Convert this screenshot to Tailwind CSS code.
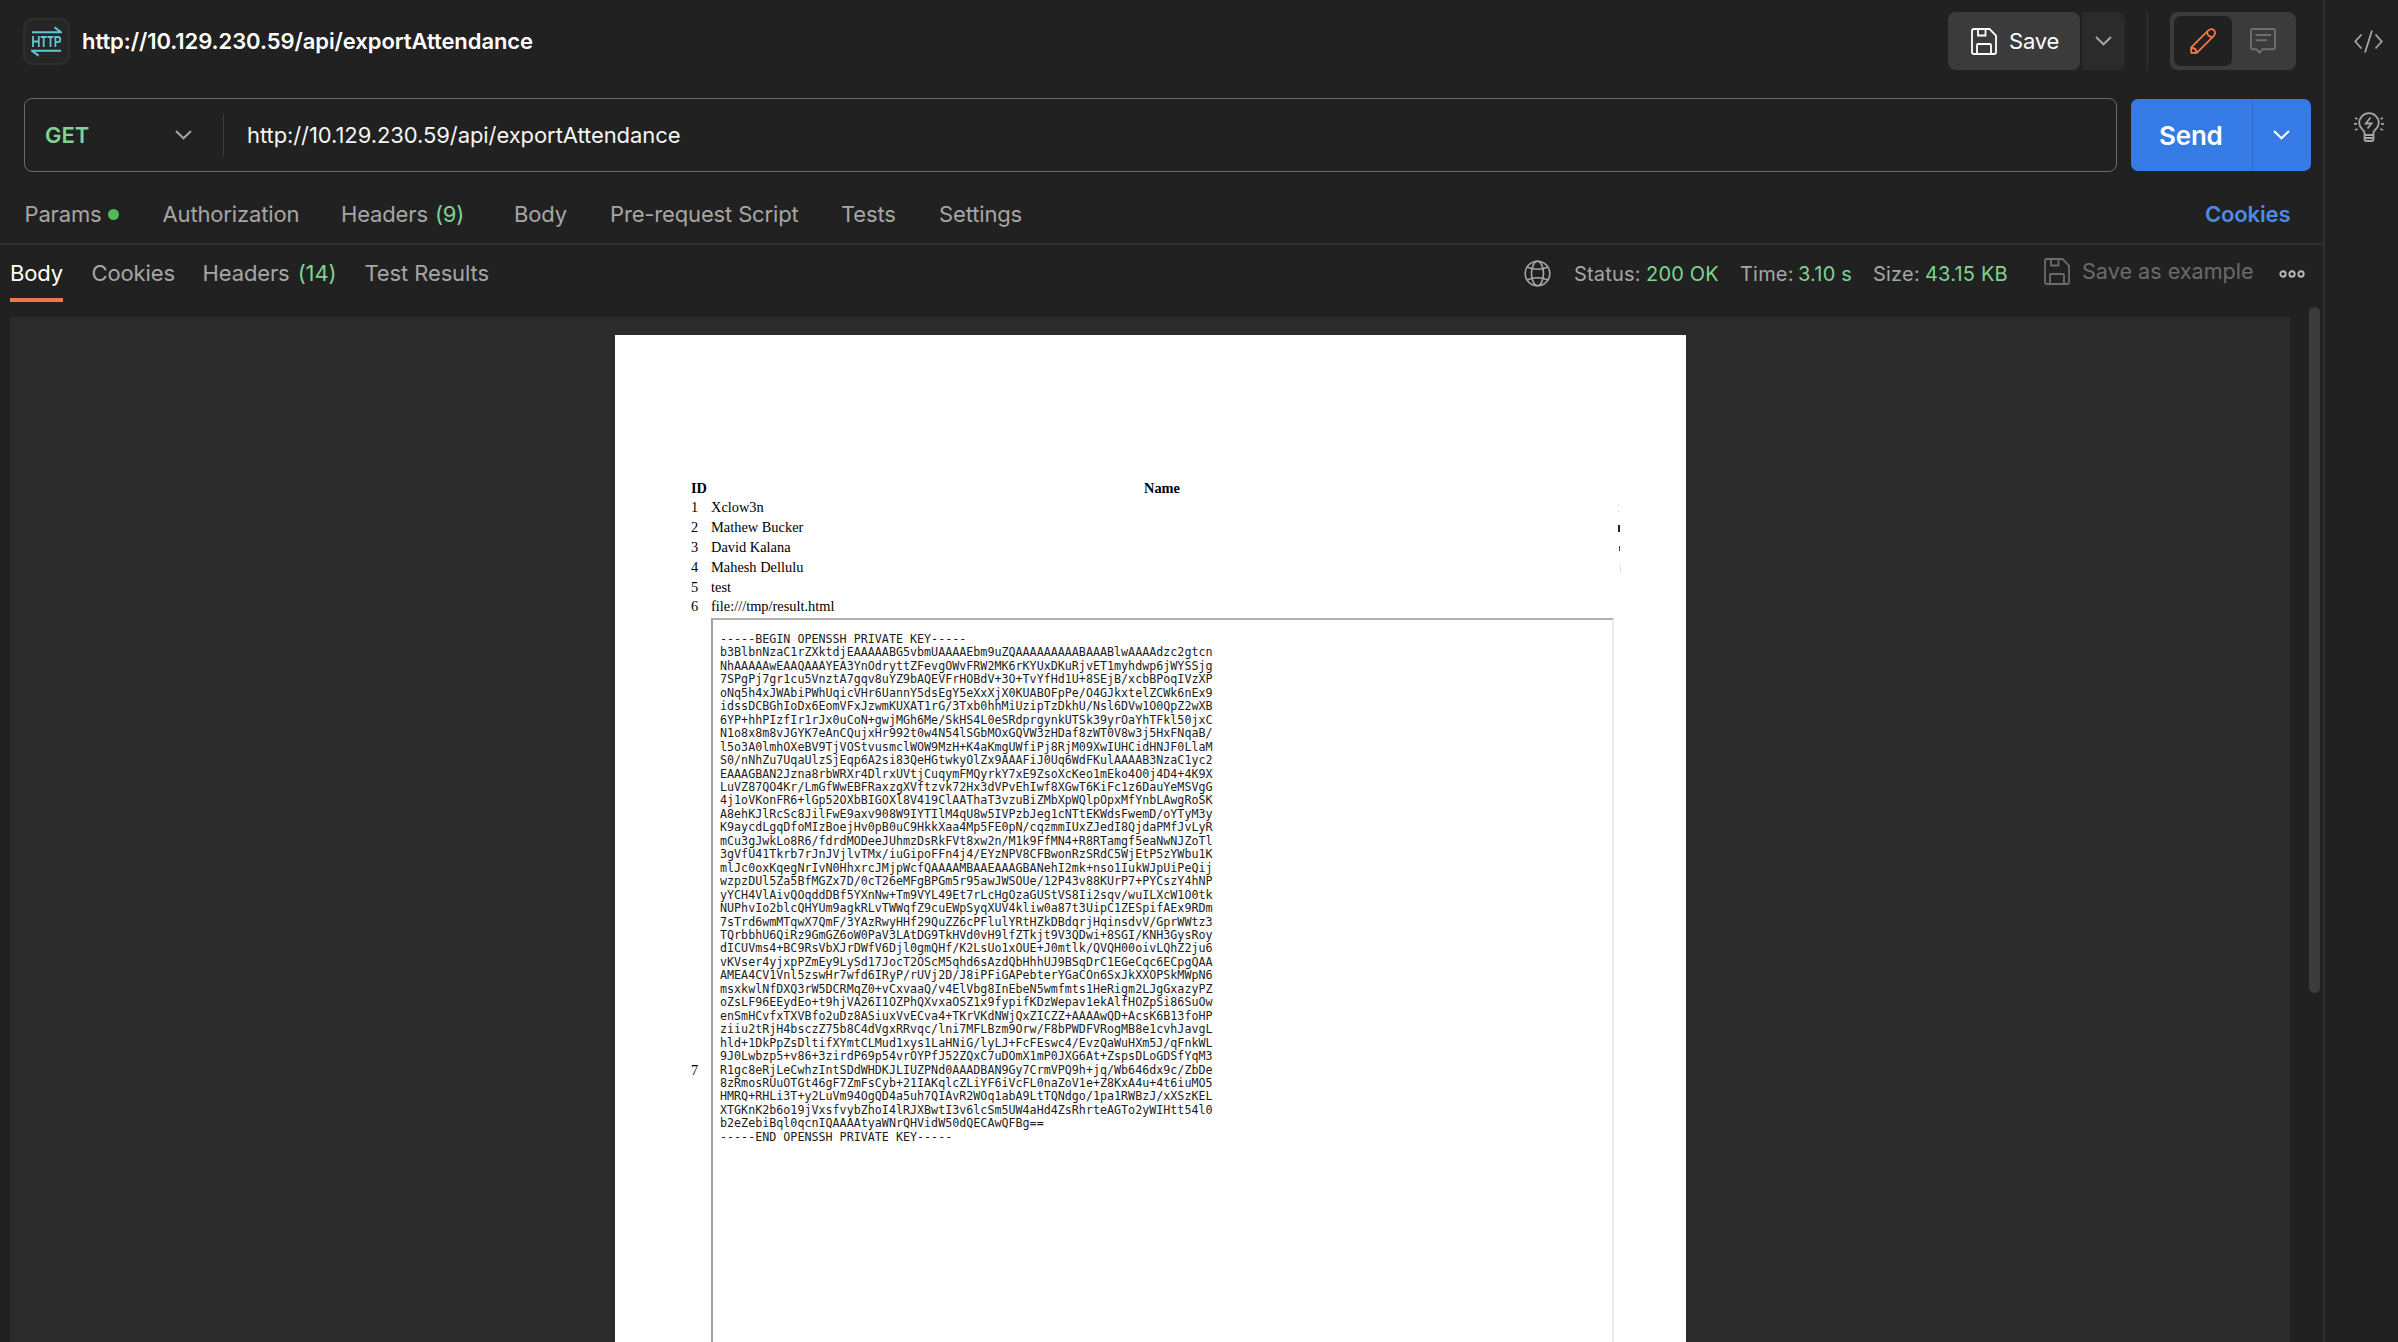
<!DOCTYPE html>
<html lang="en">
<head>
<meta charset="utf-8">
<title>exportAttendance</title>
<script src="https://cdn.jsdelivr.net/npm/@tailwindcss/browser@4"></script>
</head>
<body class="flex h-[1342px] w-[2398px] overflow-hidden bg-[#212121] font-['Inter',sans-serif] text-[22px] text-[#a6a6a6] whitespace-nowrap">
<main class="flex h-full w-[2325px] shrink-0 flex-col overflow-hidden border-r-2 border-[#303030]">
  <!-- Request title -->
  <header class="flex h-[82px] shrink-0 items-center pl-[23px]">
    <div class="flex size-[47px] items-center justify-center rounded-[10px] border-2 border-[#2f2f2f] bg-[#262626]">
      <svg class="size-[31px]" viewBox="0 0 31 31" fill="none" stroke="#62c6d8" stroke-width="2">
        <path d="M1 6.2H30L23.5 1.3"/><path d="M30 24.7H1L7.5 29.6"/>
        <path stroke-width="1.8" d="M2 10V21M7.8 10V21M2 15.5H7.8M9.6 11H15.8M12.7 11V21M16.4 11H22.6M19.5 11V21M24.4 21V11H27Q29.3 11 29.3 13.6Q29.3 16.2 27 16.2H24.4"/>
      </svg>
    </div>
    <h1 class="ml-[12px] w-[460px] font-semibold tracking-[-0.07px] text-white">http://10.129.230.59/api/exportAttendance</h1>
    <div class="ml-[1406px] flex h-[58px] gap-[2px]">
      <button class="flex w-[132px] items-center rounded-[8px] bg-[#3b3b3b] pl-[23px] text-white">
        <svg class="h-[27px] w-[26px]" viewBox="0 0 26 27" fill="none" stroke="currentColor" stroke-width="1.8"><path d="M3 1H18.5L25 7.5V24Q25 26 23 26H3Q1 26 1 24V3Q1 1 3 1ZM7 1V7.5H14.5V1M6 26V17Q6 16 7 16H19Q20 16 20 17V26"/></svg>
        <span class="ml-[12px] tracking-[-0.2px]">Save</span>
      </button>
      <button class="flex w-[43px] items-center justify-center rounded-r-[8px] bg-[#2b2b2b]">
        <svg class="h-[10px] w-[17px]" viewBox="0 0 17 10" fill="none" stroke="#a6a6a6" stroke-width="2"><path d="M1 1L8.5 8.3L16 1"/></svg>
      </button>
    </div>
    <div class="ml-[22px] h-[58px] w-px bg-[#333333]"></div>
    <div class="ml-[22px] flex h-[58px] w-[126px] items-center rounded-[8px] bg-[#3b3b3b] p-1">
      <div class="flex h-[50px] w-[58px] items-center justify-center rounded-[7px] bg-[#212121]">
        <svg class="size-[26px]" viewBox="0 0 26 26" fill="none" stroke="#ff7a45" stroke-width="1.7" stroke-linejoin="round"><path d="M1.2 24.8V19.3L18.4 2.4Q21.4 -.1 24 2.2Q26.3 4.8 23.8 7.8L6.8 24.8ZM17.2 3.6Q17 9 22.6 9M1.5 19.8Q6.2 19.8 6.5 24.5"/></svg>
      </div>
      <svg class="ml-[18px] h-[26px] w-[26px]" viewBox="0 0 26 26" fill="none" stroke="#6f6f6f" stroke-width="1.9"><path d="M2.5 1H23.5Q25 1 25 2.5V19.8Q25 21.3 23.5 21.3H12.5L9.5 24.5L6.5 21.3H2.5Q1 21.3 1 19.8V2.5Q1 1 2.5 1ZM5.5 7H21M5.5 12.3H17"/></svg>
    </div>
  </header>
  <!-- Address bar -->
  <section class="mt-4 flex h-[74px] shrink-0 items-center pl-6">
    <div class="flex h-[74px] w-[2093px] items-center rounded-[8px] border border-[#6b6b6b]">
      <span class="ml-[20px] w-[128px] font-semibold text-[#7ed492]">GET</span>
      <svg class="ml-[2px] h-[10px] w-[17px]" viewBox="0 0 17 10" fill="none" stroke="#a6a6a6" stroke-width="2"><path d="M1 1L8.5 8.3L16 1"/></svg>
      <div class="ml-[31px] h-[43px] w-px bg-[#3b3b3b]"></div>
      <span class="ml-[23px] tracking-[-0.08px] text-[#f5f5f5]">http://10.129.230.59/api/exportAttendance</span>
    </div>
    <div class="ml-[14px] flex h-[72px] w-[180px] items-center rounded-[7px] bg-[#367ae5] text-white">
      <span class="w-[121px] pl-[28px] text-[26px] font-semibold tracking-[-0.2px]">Send</span>
      <div class="h-full w-px bg-[#2f6ac8]"></div>
      <svg class="ml-[20px] h-[10px] w-[17px]" viewBox="0 0 17 10" fill="none" stroke="#fff" stroke-width="2"><path d="M1 1L8.5 8.3L16 1"/></svg>
    </div>
  </section>
  <!-- Request tabs -->
  <nav class="flex h-[73px] shrink-0 items-center border-b-2 border-[#303030] pt-[14px] tracking-[-0.15px]">
    <span class="ml-[24.5px] w-[83.5px]">Params</span><span class="size-[11px] rounded-full bg-[#52b85c]"></span>
    <span class="ml-[43.5px] w-[178.5px]">Authorization</span>
    <span class="w-[173px]">Headers <span class="ml-[1px] text-[#7ed492]">(9)</span></span>
    <span class="w-[96px]">Body</span>
    <span class="w-[231px]">Pre-request Script</span>
    <span class="w-[98px]">Tests</span>
    <span class="w-[1266px]">Settings</span>
    <span class="font-semibold text-[#4f8ae6]">Cookies</span>
  </nav>
  <!-- Response tabs and status -->
  <nav class="flex h-[57px] shrink-0 items-center pl-[10px] tracking-[-0.12px]">
    <span class="mr-[28.5px] flex h-full w-[53px] items-center border-b-4 border-[#f1764a] pt-1 text-white">Body</span>
    <span class="w-[111px]">Cookies</span>
    <span class="w-[162px]">Headers <span class="ml-[2px] text-[#7ed492]">(14)</span></span>
    <span class="w-[1159.5px]">Test Results</span>
    <svg class="size-[27px]" viewBox="0 0 27 27" fill="none" stroke="#a6a6a6" stroke-width="1.6"><circle cx="13.5" cy="13.5" r="12.3"/><ellipse cx="13.5" cy="13.5" rx="6" ry="12.3"/><path d="M3 7Q13.5 11.5 24 7M3 20Q13.5 15.5 24 20"/></svg>
    <div class="ml-[23px] flex items-center text-[20px] tracking-[0.2px]">
      <span class="w-[72px]">Status:</span><span class="w-[94px] text-[#7ed492]">200 OK</span>
      <span class="w-[58px]">Time:</span><span class="w-[75px] text-[#7ed492]">3.10 s</span>
      <span class="w-[52px]">Size:</span><span class="w-[119px] text-[#7ed492]">43.15 KB</span>
    </div>
    <div class="mb-[4px] flex items-center text-[21.6px] text-[#6b6b6b]">
      <svg class="h-[27px] w-[26px]" viewBox="0 0 26 27" fill="none" stroke="currentColor" stroke-width="1.8"><path d="M3 1H18.5L25 7.5V24Q25 26 23 26H3Q1 26 1 24V3Q1 1 3 1ZM7 1V7.5H14.5V1M6 26V17Q6 16 7 16H19Q20 16 20 17V26"/></svg>
      <span class="ml-[12px] w-[197px] tracking-normal">Save as example</span>
    </div>
    <svg class="h-[8px] w-[26px]" viewBox="0 0 26 8" fill="none" stroke="#b8b8b8" stroke-width="1.9"><circle cx="4" cy="4" r="2.7"/><circle cx="13" cy="4" r="2.7"/><circle cx="22" cy="4" r="2.7"/></svg>
  </nav>
  <!-- Response preview -->
  <section class="flex h-[1040px] shrink-0 overflow-hidden pl-[10px]">
    <div class="mt-[15px] flex w-[2280px] justify-start overflow-hidden bg-[#2b2b2b] pt-[18px] pl-[605px]">
      <article class="h-[1007px] w-[1071px] overflow-hidden bg-white pt-[144px] pl-[76px] font-['Liberation_Serif',serif] text-[14.4px] text-black">
        <div class="flex h-[19px] items-center font-bold"><span class="w-[453px]">ID</span><span>Name</span></div>
        <div class="flex h-[20px] items-center"><span class="w-[20px]">1</span><span class="w-[907px]">Xclow3n</span><span class="flex h-[7px] w-[1px] flex-col justify-between"><i class="h-px bg-[#ccc]"></i><i class="h-px bg-[#ccc]"></i></span></div>
        <div class="flex h-[20px] items-center"><span class="w-[20px]">2</span><span class="w-[907px]">Mathew Bucker</span><i class="h-[7px] w-[2px] bg-[#222]"></i></div>
        <div class="flex h-[20px] items-center"><span class="w-[20px]">3</span><span class="w-[908px]">David Kalana</span><i class="h-[5px] w-px bg-[#444]"></i></div>
        <div class="flex h-[20px] items-center"><span class="w-[20px]">4</span><span class="w-[909px]">Mahesh Dellulu</span><i class="h-[7px] w-px bg-[#ddd]"></i></div>
        <div class="flex h-[20px] items-center"><span class="w-[20px]">5</span><span>test</span></div>
        <div class="flex h-[18px] items-center"><span class="w-[20px]">6</span><span>file:///tmp/result.html</span></div>
        <div class="mt-[2px] flex h-[905px] items-center">
          <span class="w-[20px]">7</span>
          <div class="h-full w-[903px] border-2 border-t-[#b0b0b0] border-r-[#ebebeb] border-b-[#ebebeb] border-l-[#a0a0a0]">
            <pre class="pt-[13px] pl-[7px] font-['DejaVu_Sans_Mono',monospace] text-[11.69px] leading-[13.46px] text-[#1c1c1c]">-----BEGIN OPENSSH PRIVATE KEY-----
b3BlbnNzaC1rZXktdjEAAAAABG5vbmUAAAAEbm9uZQAAAAAAAAABAAABlwAAAAdzc2gtcn
NhAAAAAwEAAQAAAYEA3YnOdryttZFevgOWvFRW2MK6rKYUxDKuRjvET1myhdwp6jWYSSjg
7SPgPj7gr1cu5VnztA7gqv8uYZ9bAQEVFrHOBdV+3O+TvYfHd1U+8SEjB/xcbBPoqIVzXP
oNq5h4xJWAbiPWhUqicVHr6UannY5dsEgY5eXxXjX0KUABOFpPe/O4GJkxtelZCWk6nEx9
idssDCBGhIoDx6EomVFxJzwmKUXAT1rG/3Txb0hhMiUzipTzDkhU/Nsl6DVw1O0QpZ2wXB
6YP+hhPIzfIr1rJx0uCoN+gwjMGh6Me/SkHS4L0eSRdprgynkUTSk39yrOaYhTFkl50jxC
N1o8x8m8vJGYK7eAnCQujxHr992t0w4N54lSGbMOxGQVW3zHDaf8zWT0V8w3j5HxFNqaB/
l5o3A0lmhOXeBV9TjVOStvusmclWOW9MzH+K4aKmgUWfiPj8RjM09XwIUHCidHNJF0LlaM
S0/nNhZu7UqaUlzSjEqp6A2si83QeHGtwkyOlZx9AAAFiJ0Uq6WdFKulAAAAB3NzaC1yc2
EAAAGBAN2Jzna8rbWRXr4DlrxUVtjCuqymFMQyrkY7xE9ZsoXcKeo1mEko4O0j4D4+4K9X
LuVZ87QO4Kr/LmGfWwEBFRaxzgXVftzvk72Hx3dVPvEhIwf8XGwT6KiFc1z6DauYeMSVgG
4j1oVKonFR6+lGp52OXbBIGOXl8V419ClAAThaT3vzuBiZMbXpWQlpOpxMfYnbLAwgRoSK
A8ehKJlRcSc8JilFwE9axv908W9IYTIlM4qU8w5IVPzbJeg1cNTtEKWdsFwemD/oYTyM3y
K9aycdLgqDfoMIzBoejHv0pB0uC9HkkXaa4Mp5FE0pN/cqzmmIUxZJedI8QjdaPMfJvLyR
mCu3gJwkLo8R6/fdrdMODeeJUhmzDsRkFVt8xw2n/M1k9FfMN4+R8RTamgf5eaNwNJZoTl
3gVfU41Tkrb7rJnJVjlvTMx/iuGipoFFn4j4/EYzNPV8CFBwonRzSRdC5WjEtP5zYWbu1K
mlJc0oxKqegNrIvN0HhxrcJMjpWcfQAAAAMBAAEAAAGBANehI2mk+nso1IukWJpUiPeQij
wzpzDUl5Za5BfMGZx7D/0cT26eMFgBPGm5r95awJWSOUe/12P43v88KUrP7+PYCszY4hNP
yYCH4VlAivQOqddDBf5YXnNw+Tm9VYL49Et7rLcHgOzaGUStVS8Ii2sqv/wuILXcW1O0tk
NUPhvIo2blcQHYUm9agkRLvTWWqfZ9cuEWpSyqXUV4kliw0a87t3UipC1ZESpifAEx9RDm
7sTrd6wmMTqwX7QmF/3YAzRwyHHf29QuZZ6cPFlulYRtHZkDBdqrjHqinsdvV/GprWWtz3
TQrbbhU6QiRz9GmGZ6oW0PaV3LAtDG9TkHVd0vH9lfZTkjt9V3QDwi+8SGI/KNH3GysRoy
dICUVms4+BC9RsVbXJrDWfV6Djl0gmQHf/K2LsUo1xOUE+J0mtlk/QVQH00oivLQhZ2ju6
vKVser4yjxpPZmEy9LySd17JocT2OScM5qhd6sAzdQbHhhUJ9BSqDrC1EGeCqc6ECpgQAA
AMEA4CV1Vnl5zswHr7wfd6IRyP/rUVj2D/J8iPFiGAPebterYGaCOn6SxJkXXOPSkMWpN6
msxkwlNfDXQ3rW5DCRMqZ0+vCxvaaQ/v4ElVbg8InEbeN5wmfmts1HeRigm2LJgGxazyPZ
oZsLF96EEydEo+t9hjVA26I1OZPhQXvxaOSZ1x9fypifKDzWepav1ekAlfHOZpSi86SuOw
enSmHCvfxTXVBfo2uDz8ASiuxVvECva4+TKrVKdNWjQxZICZZ+AAAAwQD+AcsK6B13foHP
ziiu2tRjH4bsczZ75b8C4dVgxRRvqc/lni7MFLBzm9Orw/F8bPWDFVRogMB8e1cvhJavgL
hld+1DkPpZsDltifXYmtCLMud1xys1LaHNiG/lyLJ+FcFEswc4/EvzQaWuHXm5J/qFnkWL
9J0Lwbzp5+v86+3zirdP69p54vrOYPfJ52ZQxC7uDOmX1mP0JXG6At+ZspsDLoGDSfYqM3
R1gc8eRjLeCwhzIntSDdWHDKJLIUZPNd0AAADBAN9Gy7CrmVPQ9h+jq/Wb646dx9c/ZbDe
8zRmosRUuOTGt46gF7ZmFsCyb+21IAKqlcZLiYF6iVcFL0naZoV1e+Z8KxA4u+4t6iuMO5
HMRQ+RHLi3T+y2LuVm94OgQD4a5uh7QIAvR2WOq1abA9LtTQNdgo/1pa1RWBzJ/xXSzKEL
XTGKnK2b6o19jVxsfvybZhoI4lRJXBwtI3v6lcSm5UW4aHd4ZsRhrteAGTo2yWIHtt54l0
b2eZebiBql0qcnIQAAAAtyaWNrQHVidW50dQECAwQFBg==
-----END OPENSSH PRIVATE KEY-----</pre>
          </div>
        </div>
      </article>
    </div>
    <div class="mt-[5px] ml-[19px] h-[686px] w-[11px] rounded-full bg-[#3b3b3b]"></div>
  </section>
</main>
<!-- Side rail -->
<aside class="flex flex-col items-start pt-[30px] pl-[29px]">
  <svg class="h-[23px] w-[29px]" viewBox="0 0 29 23" fill="none" stroke="#a6a6a6" stroke-width="1.8"><path d="M7.5 4.5L1.3 11.5L7.5 18.5M21.5 4.5L27.7 11.5L21.5 18.5M18 .5L11 22.5"/></svg>
  <svg class="mt-[59px] h-[31px] w-[30px]" viewBox="0 0 30 31" fill="none" stroke="#a6a6a6" stroke-width="1.8"><path d="M10.5 23V20.5C10.5 18 5.2 16.3 5.2 11A9.8 9.8 0 0 1 24.8 11C24.8 16.3 19.5 18 19.5 20.5V27Q19.5 29 17.5 29H12.5Q10.5 29 10.5 27V23H19.5M10.5 26H19.5M16.5 5.5L11.8 11.5H17.6L13.5 16.5M0 11.8H3M1 6L3.6 7M1 18L3.6 17M30 11.8H27M29 6L26.4 7M29 18L26.4 17"/></svg>
</aside>
</body>
</html>
